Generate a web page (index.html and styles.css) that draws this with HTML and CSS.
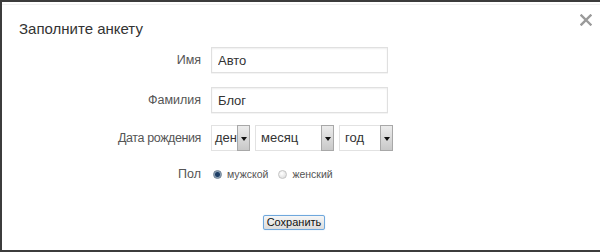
FILE: index.html
```html
<!DOCTYPE html>
<html lang="ru">
<head>
  <meta charset="UTF-8" />
  <title>Заполните анкету</title>
  <link rel="stylesheet" href="styles.css">
</head>
<body>
<div class="dialog">
  <div class="dialog-head">
    <div class="title">Заполните анкету</div>
    <div class="close">
      <svg width="12" height="12" viewBox="0 0 12 12"><path d="M1.5 1.5 L10.5 10.5 M10.5 1.5 L1.5 10.5" stroke="#9a9a9a" stroke-width="2.4" stroke-linecap="square"/></svg>
    </div>
  </div>
  <form class="form">
    <div class="row row-name">
      <label class="label">Имя</label>
      <input class="field" type="text" value="Авто">
    </div>
    <div class="row row-surname">
      <label class="label">Фамилия</label>
      <input class="field" type="text" value="Блог">
    </div>
    <div class="row row-date">
      <label class="label label-date">Дата рождения</label>
      <div class="selects">
        <div class="select sel-day"><span class="sel-text">день</span><span class="arrow"></span></div>
        <div class="select sel-month"><span class="sel-text">месяц</span><span class="arrow"></span></div>
        <div class="select sel-year"><span class="sel-text">год</span><span class="arrow"></span></div>
      </div>
    </div>
    <div class="row row-sex">
      <label class="label">Пол</label>
      <div class="radios">
        <span class="radio checked"></span><span class="radio-text">мужской</span>
        <span class="radio"></span><span class="radio-text">женский</span>
      </div>
    </div>
    <div class="actions">
      <button type="button" class="btn">Сохранить</button>
    </div>
  </form>
</div>
</body>
</html>
```

FILE: styles.css
```css
body {
  margin: 0;
  background: #fff;
  font-family: "Liberation Sans", Arial, sans-serif;
  color: #444;
}
.dialog {
  width: 598px;
  height: 248px;
  border-top: 2px solid #3c3c3c;
  border-bottom: 2px solid #3c3c3c;
  border-left: 2px solid #3c3c3c;
  background: #fff;
}
.dialog-head {
  display: flex;
  justify-content: space-between;
  padding: 15px 8px 0 17px;
  border-top: 1px solid #f0f0f0;
  margin-top: 2px;
  height: 22px;
}
.title {
  font-size: 15px;
  line-height: 18px;
  color: #333;
}
.close {
  margin-top: -8px;
  width: 12px;
  height: 12px;
}
.form {
  display: flex;
  flex-direction: column;
  margin-top: 5px;
}
.row {
  display: flex;
  align-items: center;
}
.label {
  width: 199px;
  text-align: right;
  font-size: 12.5px;
  color: #555;
  margin-right: 10px;
}
.label-date {
  letter-spacing: -0.4px;
}
.field {
  width: 177px;
  height: 26px;
  box-sizing: border-box;
  border: 1px solid #e0e0e0;
  box-shadow: inset 0 1px 2px #eee, 0 1px 0 #f4f4f4;
  padding: 0 6px;
  font-family: inherit;
  font-size: 13px;
  color: #333;
  margin: 0;
}
.row-surname {
  margin-top: 14px;
}
.row-date {
  margin-top: 12px;
}
.selects {
  display: flex;
  gap: 5px;
}
.select {
  display: flex;
  height: 26px;
  box-sizing: border-box;
  border: 1px solid #e2e2e2;
  font-size: 13px;
  color: #333;
  position: relative;
}
.sel-text {
  flex: 1;
  padding-left: 5px;
  line-height: 24px;
  white-space: nowrap;
}
.sel-day .sel-text {
  padding-left: 3px;
}
.arrow {
  width: 11px;
  position: absolute;
  right: -1px;
  top: -1px;
  bottom: -1px;
  border: 1px solid #a8a8a8;
  background: linear-gradient(#ececec, #c8c8c8);
}
.arrow::after {
  content: "";
  position: absolute;
  left: 3px;
  top: 11px;
  border-left: 3px solid transparent;
  border-right: 3px solid transparent;
  border-top: 4px solid #111;
}
.sel-day {
  width: 39px;
}
.sel-month {
  width: 79px;
}
.sel-year {
  width: 54px;
}
.row-sex {
  margin-top: 16px;
}
.radios {
  display: flex;
  align-items: center;
  margin-left: 2px;
  font-size: 10.5px;
  color: #555;
}
.radio {
  width: 9px;
  height: 9px;
  border-radius: 50%;
  box-sizing: border-box;
  border: 1px solid #c4c4c4;
  background: radial-gradient(circle at 40% 35%, #fff, #d8d8d8);
  margin-right: 5px;
}
.radio.checked {
  border-color: #6d7f91;
  background: radial-gradient(circle at 50% 50%, #1f3f66 0 2px, #8aa0b6 3px, #c9d4de 5px);
}
.radio-text {
  margin-right: 10px;
}
.actions {
  display: flex;
  justify-content: center;
  margin-top: 34px;
  padding-right: 14px;
}
.btn {
  font-family: inherit;
  font-size: 11px;
  line-height: 13px;
  color: #111;
  padding: 0 3px;
  border: 1px solid #6fa7dc;
  border-radius: 2px;
  background: linear-gradient(#f6f6f6, #dcdcdc);
  box-shadow: 0 0 1px #9cc7ef;
}
```
